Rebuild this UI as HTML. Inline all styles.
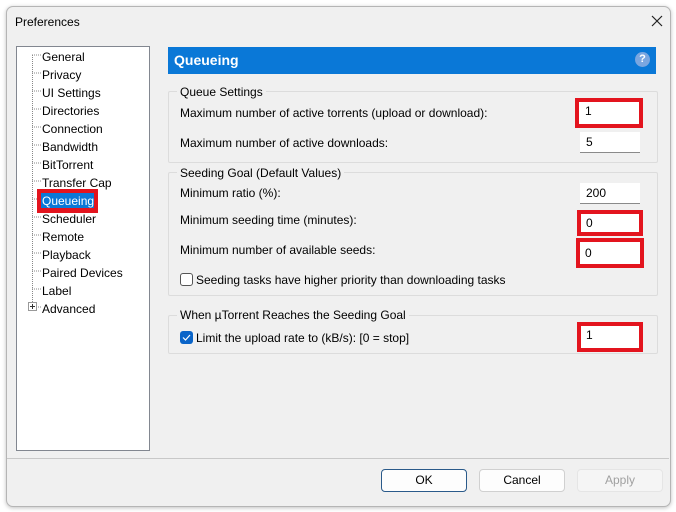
<!DOCTYPE html>
<html><head><style>
body{margin:0;width:676px;height:512px;background:#fff;font-family:"Liberation Sans",sans-serif;font-size:12px;color:#000;position:relative;overflow:hidden}
.a{position:absolute}
.win{left:6px;top:6px;width:663px;height:499px;background:#f0f0f0;border:1px solid #b5b5b5;border-radius:7px;box-shadow:0 1px 4px rgba(0,0,0,.25)}
.t{white-space:nowrap;line-height:14px}
.tree{left:16px;top:46px;width:132px;height:403px;background:#fff;border:1px solid #828790}
.gb{border:1px solid #dcdcdc;border-radius:2px}
.lg{background:#f0f0f0;padding:0 3px}
.in{background:#fff;border-bottom:1px solid #8a8a8a;width:60px;height:21px;box-sizing:border-box;padding:4px 6px;line-height:13px}
.red{border:4px solid #e3141e;box-sizing:border-box}
.btn{height:23px;box-sizing:border-box;border:1px solid #d0d0d0;border-radius:4px;background:#fdfdfd;text-align:center;line-height:21px}
</style></head><body>
<div class="a win"></div>
<div class="a t" style="left:15px;top:15px">Preferences</div>
<svg class="a" style="left:651px;top:15px" width="12" height="12"><path d="M1 1L11 11M11 1L1 11" stroke="#222" stroke-width="1.2"/></svg>
<div class="a tree"></div>
<svg class="a" style="left:24px;top:48px" width="20" height="265">
<path d="M8.5 7V259" stroke="#888" stroke-dasharray="1 1"/>
<g stroke="#888" stroke-dasharray="1 1">
<path d="M8 7H18M8 25H18M8 43H18M8 61H18M8 79H18M8 97H18M8 115H18M8 133H18M8 151H18M8 169H18M8 187H18M8 205H18M8 223H18M8 241H18M8 259H18"/></g>
<rect x="4.5" y="254.5" width="8" height="8" fill="#fff" stroke="#999"/><path d="M6 258.5H11M8.5 256V261" stroke="#333"/>
</svg>
<div class="a" style="left:37px;top:189px;width:61px;height:24px;background:#e3141e"></div>
<div class="a" style="left:41px;top:193px;width:53px;height:15px;background:#0a78d7"></div>
<div class="a t" style="left:42px;top:48px;line-height:18px">General<br>Privacy<br>UI Settings<br>Directories<br>Connection<br>Bandwidth<br>BitTorrent<br>Transfer Cap<br><span style="color:#fff">Queueing</span><br>Scheduler<br>Remote<br>Playback<br>Paired Devices<br>Label<br>Advanced</div>
<div class="a" style="left:168px;top:47px;width:488px;height:27px;background:#0a78d7"></div>
<div class="a t" style="left:174px;top:52px;color:#fff;font-weight:bold;font-size:14px;line-height:16px">Queueing</div>
<div class="a" style="left:635px;top:52px;width:15px;height:15px;border-radius:50%;background:#7aa6e0;color:#fff;font-size:11px;font-weight:bold;text-align:center;line-height:15px">?</div>

<div class="a gb" style="left:168px;top:91px;width:488px;height:70px"></div>
<div class="a t lg" style="left:177px;top:85px">Queue Settings</div>
<div class="a t" style="left:180px;top:106px">Maximum number of active torrents (upload or download):</div>
<div class="a t" style="left:180px;top:136px">Maximum number of active downloads:</div>
<div class="a in" style="left:580px;top:132px">5</div>

<div class="a gb" style="left:168px;top:172px;width:488px;height:122px"></div>
<div class="a t lg" style="left:177px;top:166px">Seeding Goal (Default Values)</div>
<div class="a t" style="left:180px;top:186px">Minimum ratio (%):</div>
<div class="a in" style="left:580px;top:183px">200</div>
<div class="a t" style="left:180px;top:213px">Minimum seeding time (minutes):</div>
<div class="a t" style="left:180px;top:243px">Minimum number of available seeds:</div>
<div class="a" style="left:180px;top:273px;width:11px;height:11px;border:1px solid #555;border-radius:3px;background:#fff"></div>
<div class="a t" style="left:196px;top:273px">Seeding tasks have higher priority than downloading tasks</div>

<div class="a gb" style="left:168px;top:315px;width:488px;height:37px"></div>
<div class="a t lg" style="left:177px;top:308px">When µTorrent Reaches the Seeding Goal</div>
<div class="a" style="left:180px;top:331px;width:13px;height:13px;border-radius:3px;background:#0a64c8"></div>
<svg class="a" style="left:180px;top:331px" width="13" height="13"><path d="M3 6.5L5.5 9L10 4" stroke="#fff" fill="none" stroke-width="1.2"/></svg>
<div class="a t" style="left:196px;top:331px">Limit the upload rate to (kB/s): [0 = stop]</div>

<div class="a red" style="left:575px;top:98px;width:68px;height:30px"></div>
<div class="a in" style="left:579px;top:102px;width:60px;border:0;height:22px;padding:3px 6px">1</div>
<div class="a red" style="left:577px;top:210px;width:66px;height:26px"></div>
<div class="a in" style="left:581px;top:214px;width:58px;border:0;height:18px;padding:3px 5px">0</div>
<div class="a red" style="left:576px;top:238px;width:68px;height:30px"></div>
<div class="a in" style="left:580px;top:242px;width:60px;border:0;height:22px;padding:5px 5px">0</div>
<div class="a red" style="left:577px;top:322px;width:66px;height:30px"></div>
<div class="a in" style="left:581px;top:326px;width:58px;border:0;height:22px;padding:3px 5px">1</div>

<div class="a" style="left:7px;top:458px;width:662px;height:1px;background:#c8c8c8"></div>
<div class="a btn" style="left:381px;top:469px;width:86px;border-color:#2a5a8a">OK</div>
<div class="a btn" style="left:479px;top:469px;width:86px">Cancel</div>
<div class="a btn" style="left:577px;top:469px;width:86px;color:#a0a0a0;background:#f5f5f5;border-color:#e5e5e5">Apply</div>
</body></html>
